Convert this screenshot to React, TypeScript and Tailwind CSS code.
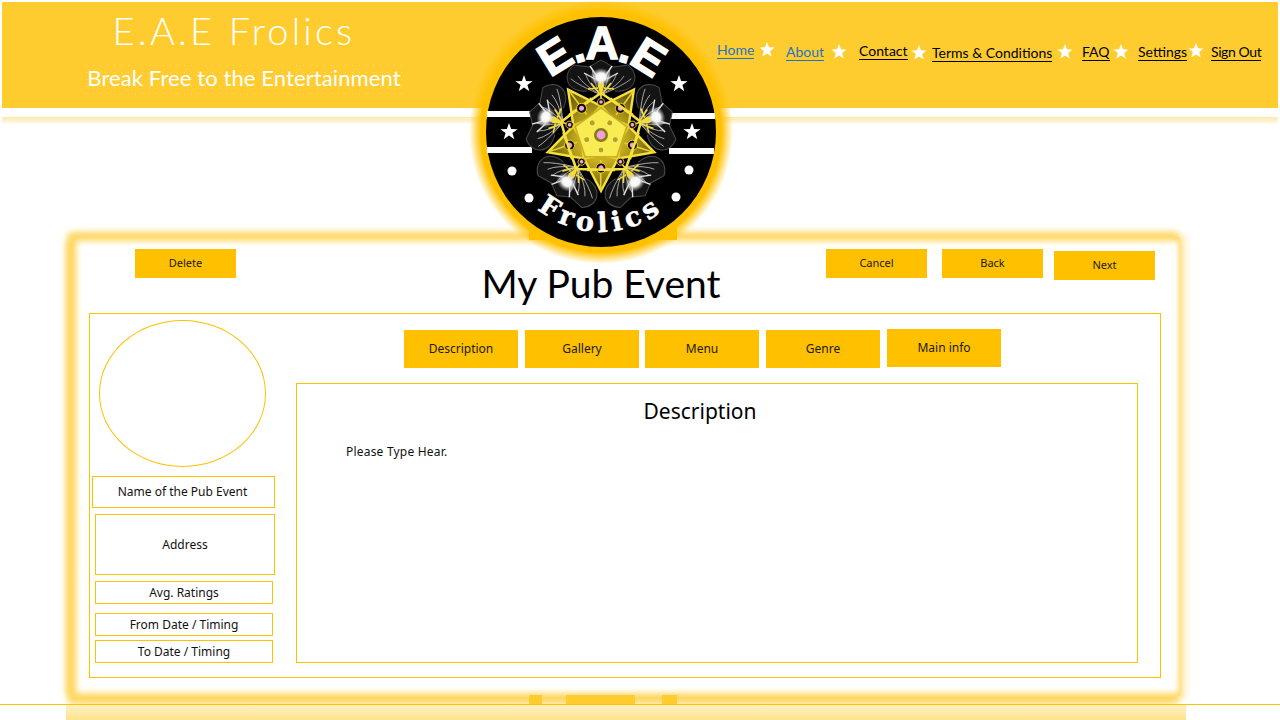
import React from 'react';

const NAV = [
  { label: 'Home', cls: 'text-[#1f74c4] border-[#1f74c4] mt-[-3px]', slot: 'w-[69px]', star: 'ml-[5px] mt-[-2px]' },
  { label: 'About', cls: 'text-[#1f74c4] border-[#1f74c4] mt-[-1px]', slot: 'w-[73px]', star: 'ml-[7px]' },
  { label: 'Contact', cls: 'text-black border-black mt-[-2px]', slot: 'w-[73px]', star: 'ml-[3px] mt-[1px]' },
  { label: 'Terms & Conditions', cls: 'text-black border-black', slot: 'w-[150px]', star: 'ml-[5px]' },
  { label: 'FAQ', cls: 'text-black border-black mt-[-1px]', slot: 'w-[56px]', star: 'ml-[3px]' },
  { label: 'Settings', cls: 'text-black border-black mt-[-1px]', slot: 'w-[73px]', star: 'ml-[1px] mt-[-1px]' },
  { label: 'Sign Out', cls: 'text-black border-black mt-[-1px] tracking-[-0.4px]', slot: '', star: '' },
];

const TABS = [
  { label: 'Description', cls: '' },
  { label: 'Gallery', cls: 'ml-[7px]' },
  { label: 'Menu', cls: 'ml-[6px]' },
  { label: 'Genre', cls: 'ml-[7px]' },
  { label: 'Main info', cls: 'ml-[7px] mt-[-1px]' },
];

const polar = (cx: number, cy: number, r: number, deg: number) => {
  const a = ((deg - 90) * Math.PI) / 180;
  return `${(cx + r * Math.cos(a)).toFixed(1)},${(cy + r * Math.sin(a)).toFixed(1)}`;
};

const starPoints = (cx: number, cy: number, R: number, r: number, n = 5, start = 0) =>
  Array.from({ length: n * 2 }, (_, i) => polar(cx, cy, i % 2 ? r : R, start + (i * 180) / n)).join(' ');

const NavStar = () => (
  <svg width="16" height="16" viewBox="0 0 16 16" className="block shrink-0">
    <polygon points={starPoints(8, 8, 8, 3.4)} fill="#fff" />
  </svg>
);

const Logo = () => {
  const five = [0, 72, 144, 216, 288];
  const webAngles = [-42, -32, -22, -12, 12, 22, 32, 42];
  return (
    <svg width="290" height="290" viewBox="0 0 290 290" className="absolute left-[456px] top-[-13px]">
      <defs>
        <radialGradient id="halo">
          <stop offset="86%" stopColor="#ffc000" />
          <stop offset="91%" stopColor="#ffc000" />
          <stop offset="100%" stopColor="#ffc000" stopOpacity="0" />
        </radialGradient>
        <radialGradient id="flare">
          <stop offset="0%" stopColor="#fff" />
          <stop offset="45%" stopColor="#f4f4f4" />
          <stop offset="100%" stopColor="#bbb" stopOpacity="0" />
        </radialGradient>
        <radialGradient id="starFill">
          <stop offset="40%" stopColor="#c9b020" />
          <stop offset="100%" stopColor="#6d5d0c" />
        </radialGradient>
        <path id="arcTop" d="M 72 145 A 73 73 0 0 1 218 145" />
        <path id="arcBottom" d="M 45 145 A 100 100 0 0 0 245 145" />
      </defs>
      <circle cx="145" cy="145" r="132" fill="url(#halo)" />
      <circle cx="145" cy="145" r="115" fill="#000" />

      {/* side bars */}
      <rect x="31" y="124" width="46" height="6" fill="#fff" />
      <rect x="31" y="160" width="45" height="6" fill="#fff" />
      <rect x="213" y="126" width="46" height="6" fill="#fff" />
      <rect x="213" y="161" width="45" height="6" fill="#fff" />

      {/* stars and dots */}
      <polygon points={starPoints(68, 97, 9, 3.6)} fill="#fff" />
      <polygon points={starPoints(223, 97, 9, 3.6)} fill="#fff" />
      <polygon points={starPoints(53, 145, 9, 3.6)} fill="#fff" />
      <polygon points={starPoints(236, 145, 9, 3.6)} fill="#fff" />
      <circle cx="56" cy="184" r="4.5" fill="#fff" />
      <circle cx="233" cy="183" r="4.5" fill="#fff" />
      <circle cx="73" cy="211" r="4.5" fill="#fff" />
      <circle cx="220" cy="210" r="4.5" fill="#fff" />

      <text fontFamily="'Liberation Sans', sans-serif" fontWeight="700" fontSize="46" fill="#fff" stroke="#fff" strokeWidth="1.4" textAnchor="middle" letterSpacing="-2">
        <textPath href="#arcTop" startOffset="50%">E.A.E</textPath>
      </text>
      <text fontFamily="'DejaVu Serif', serif" fontWeight="700" fontSize="27" fill="#fff" stroke="#fff" strokeWidth="0.5" textAnchor="middle" letterSpacing="5">
        <textPath href="#arcBottom" startOffset="50%">Frolics</textPath>
      </text>

      {/* mandala */}
      <g transform="translate(145 148)">
        {five.map((a) => (
          <g key={`web${a}`} transform={`rotate(${a})`} fill="none">
            <path d="M-14 -44 C-34 -42 -40 -60 -27 -70 L-12 -68 L0 -75 L12 -68 L27 -70 C40 -60 34 -42 14 -44" fill="#141414" stroke="#4a4a4a" strokeWidth="1" />
            {webAngles.map((w) => (
              <path key={w} d={`M0 -40 Q${w * 0.55} -50 ${w * 0.72} ${-68 + Math.abs(w) * 0.28}`} stroke="#a8a8a8" strokeWidth="0.9" />
            ))}
            <path d="M-6 -56 L-17 -62 M6 -56 L17 -62 M-5 -60 L-11 -69 M5 -60 L11 -69" stroke="#e4e4e4" strokeWidth="1.4" />
            <path d="M0 -38 L-3.5 -50 L0 -60 L3.5 -50 Z" fill="#f2dc3c" />
            <path d="M-2 -42 L-10 -52 M2 -42 L10 -52 M-3 -47 L-13 -46 M3 -47 L13 -46" stroke="#f2dc3c" strokeWidth="1.5" />
            <ellipse cx="0" cy="-58" rx="11" ry="9" fill="url(#flare)" />
          </g>
        ))}
        <polygon points={starPoints(0, 0, 56, 29, 5, 36)} fill="url(#starFill)" stroke="#f5e040" strokeWidth="2.4" />
        {five.map((a) => (
          <g key={`ray${a}`} transform={`rotate(${a})`}>
            <path d="M-32 -20 L0 -42 L32 -20" fill="none" stroke="#f5e040" strokeWidth="2.6" />
            <path d="M-20 -6 L0 -30 L20 -6" fill="none" stroke="#e8d030" strokeWidth="2" />
            <path d="M0 -28 L0 -46" stroke="#f2dc3c" strokeWidth="1.6" />
            <path d="M15 -20 L33 -45" stroke="#e8d030" strokeWidth="1.6" />
            <circle cx="0" cy="-33" r="3.6" fill="#120f00" stroke="#f0d834" strokeWidth="0.8" />
            <circle cx="0" cy="-33" r="1.8" fill="#f0a0dc" />
            <circle cx="19.4" cy="-26.7" r="5" fill="#120f00" stroke="#f0d834" strokeWidth="0.8" />
            <circle cx="19.4" cy="-26.7" r="2.5" fill="#f0a0dc" />
          </g>
        ))}
        <polygon points={five.map((a) => polar(0, 0, 27, a)).join(' ')} fill="#f8ec52" stroke="#c9b020" strokeWidth="1.5" />
        {five.map((a) => (
          <circle key={`in${a}`} cx="0" cy="-15" r="3" fill="#b8a41c" stroke="#fff07a" strokeWidth="1" transform={`rotate(${a + 36})`} />
        ))}
        <circle r="7" fill="#8a7a12" />
        <circle r="4.4" fill="#ef9fe0" />
      </g>
    </svg>
  );
};

const SideBox = ({ label, cls }: { label: string; cls: string }) => (
  <div className={`border border-[#ffc000] flex items-center justify-center text-xs text-[#111] ${cls}`}>{label}</div>
);

const ActionButton = ({ label, cls = '' }: { label: string; cls?: string }) => (
  <button className={`w-[101px] h-[29px] bg-[#ffc000] text-[11px] text-[#1a1a1a] ${cls}`}>{label}</button>
);

const TabButton = ({ label, cls = '' }: { label: string; cls?: string }) => (
  <button className={`w-[114px] h-[38px] bg-[#ffc000] text-xs text-[#1a1a1a] ${cls}`}>{label}</button>
);

export default function App() {
  return (
    <div className="relative w-[1280px] h-[720px] overflow-hidden bg-white font-['Noto_Sans',sans-serif]">
      {/* header */}
      <header className="mx-[2px] mt-[2px] h-[106px] bg-[#ffcc2f] flex">
        <div className="w-[468px] shrink-0 flex flex-col items-center text-white font-['Lato',sans-serif] font-light">
          <div className="ml-[-4px] mt-[5px] text-[38px] leading-[46px] tracking-[3.2px]">E.A.E Frolics</div>
          <div className="ml-[16px] mt-[9px] px-[4px] text-[22px] leading-[32px] font-normal tracking-[0.1px] bg-[radial-gradient(#ffffff55_0.6px,transparent_1px)] bg-[size:7px_7px]">Break Free to the Entertainment</div>
        </div>
        <nav className="ml-[247px] mt-[42px] flex items-start text-sm leading-[17px] font-['Lato',sans-serif]">
          {NAV.map((n) => (
            <div key={n.label} className={`flex items-start shrink-0 ${n.slot}`}>
              <span className={`border-b whitespace-nowrap shrink-0 ${n.cls}`}>{n.label}</span>
              {n.slot && <span className={`block ${n.star}`}><NavStar /></span>}
            </div>
          ))}
        </nav>
      </header>
      <div className="mx-[2px] mt-[9px] h-[6px] bg-gradient-to-b from-[#ffe9a8] to-[#fff8e0]" />

      {/* main panel */}
      <main className="ml-[72px] mt-[114px] w-[1108px] h-[460px] rounded-[3px] shadow-[-3px_-3px_6px_2px_#ffd866,-3px_5px_6px_2px_#ffd866,4px_0_6px_3px_#fff0c8,inset_4px_4px_6px_0_#ffd866,inset_0_-4px_6px_0_#ffd866,inset_-2px_0_4px_0_#fff0c8] pt-[12px] px-[17px] flex flex-col">
        <div className="flex items-start h-[64px]">
          <ActionButton label="Delete" cls="ml-[46px]" />
          <div className="ml-[590px] flex items-start">
            <ActionButton label="Cancel" />
            <ActionButton label="Back" cls="ml-[15px]" />
            <ActionButton label="Next" cls="ml-[11px] mt-[2px]" />
          </div>
        </div>
        <div className="w-[1072px] h-[365px] border border-[#ffc000] flex">
          <aside className="w-[206px] shrink-0 flex flex-col pl-[2px] pt-[6px]">
            <div className="ml-[7px] w-[167px] h-[147px] rounded-[50%] border border-[#ffc000]" />
            <SideBox label="Name of the Pub Event" cls="mt-[9px] w-[183px] h-[32px] pr-[2px]" />
            <SideBox label="Address" cls="ml-[3px] mt-[6px] w-[180px] h-[61px]" />
            <SideBox label="Avg. Ratings" cls="ml-[3px] mt-[6px] w-[178px] h-[23px]" />
            <SideBox label="From Date / Timing" cls="ml-[3px] mt-[9px] w-[178px] h-[23px]" />
            <SideBox label="To Date / Timing" cls="ml-[3px] mt-[4px] w-[178px] h-[23px]" />
          </aside>
          <section className="flex-1 flex flex-col">
            <div className="flex items-start ml-[108px] mt-[16px] h-[53px]">
              {TABS.map((t) => (
                <TabButton key={t.label} label={t.label} cls={t.cls} />
              ))}
            </div>
            <div className="w-[842px] h-[280px] border border-[#ffc000] flex flex-col">
              <h2 className="mt-[12px] pr-[34px] text-center text-[21px] leading-[30px] text-black">Description</h2>
              <p className="ml-[49px] mt-[17px] text-xs leading-[18px] tracking-[0.2px] text-[#111]">Please Type Hear.</p>
            </div>
          </section>
        </div>
      </main>

      {/* title sits between the buttons */}
      <h1 className="absolute left-[401px] top-[257px] w-[400px] text-center text-[39px] leading-[52px] text-black font-['Lato',sans-serif]">My Pub Event</h1>

      {/* logo shadow pieces around the panel */}
      <div className="absolute left-[529px] top-[225px] w-[148px] h-[15px] bg-[#ffc000]" />
      <Logo />
      <div className="absolute left-[529px] top-[695px] w-[13px] h-[9px] bg-[#ffcc2f]" />
      <div className="absolute left-[566px] top-[695px] w-[69px] h-[9px] bg-[#ffcc2f]" />
      <div className="absolute left-[662px] top-[695px] w-[15px] h-[9px] bg-[#ffcc2f]" />

      {/* footer rule and band */}
      <div className="absolute left-0 top-[704px] w-[1280px] h-px bg-[#ffc000]" />
      <div className="absolute left-[66px] top-[705px] w-[1120px] h-[15px] bg-gradient-to-b from-[#fff0c4] to-[#ffe38c]" />
    </div>
  );
}
